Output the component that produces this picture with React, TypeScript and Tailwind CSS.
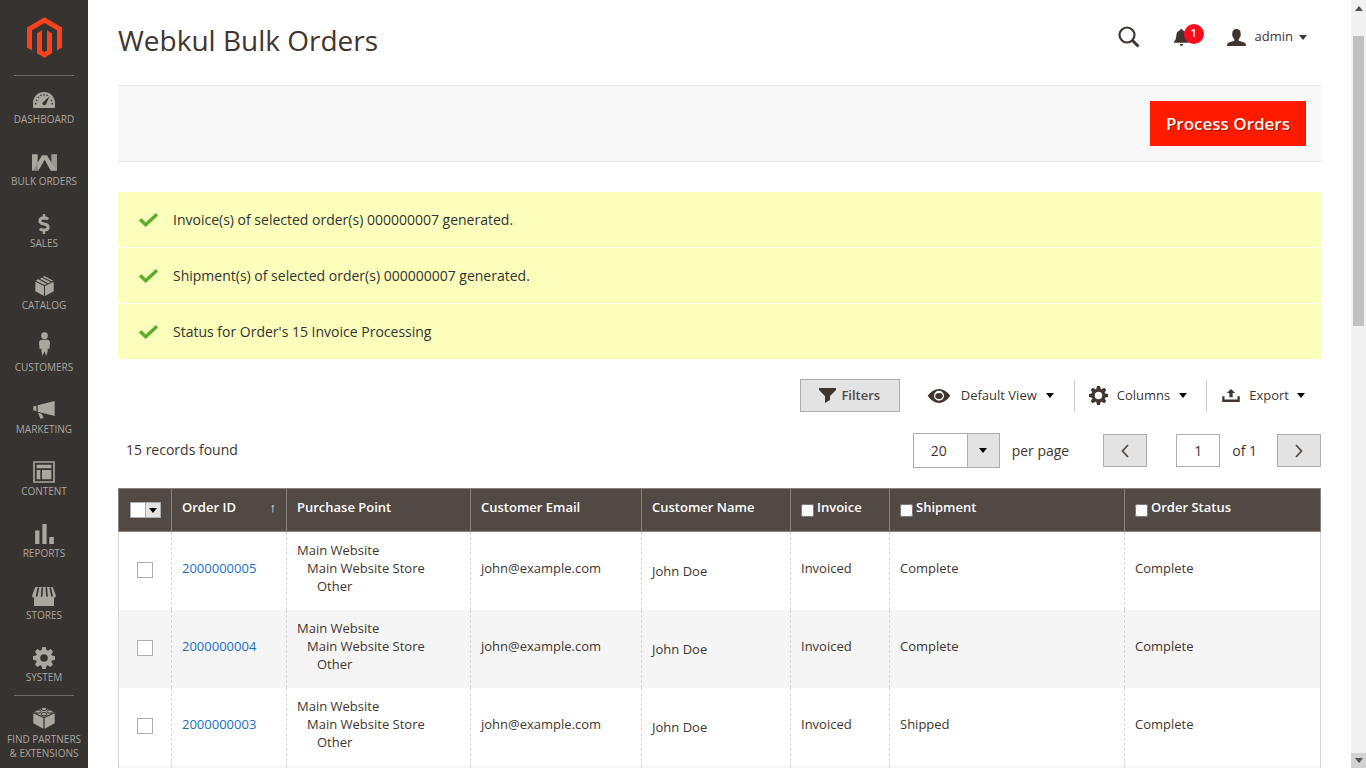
import { ReactNode, useState } from "react";
import { FaDollarSign } from "react-icons/fa";

const DARK = "#373330";

interface NavItem {
  label: string;
  icon: ReactNode;
}

interface Order {
  id: string;
  email: string;
  name: string;
  invoice: string;
  shipment: string;
  status: string;
}

// Gear with eight teeth, shared by the menu and the grid toolbar
function Gear({ className, ring = 13 }: { className: string; ring?: number }) {
  return (
    <svg viewBox="0 0 66 66" className={className} fill="currentColor">
      <circle cx="33" cy="33" r="18" fill="none" stroke="currentColor" strokeWidth={ring} />
      {[0, 45, 90, 135, 180, 225, 270, 315].map((a) => (
        <path key={a} d="M24 15L28 0H38L42 15Z" transform={`rotate(${a} 33 33)`} />
      ))}
    </svg>
  );
}

function Caret({ className = "" }: { className?: string }) {
  return (
    <svg viewBox="0 0 8 5" className={`h-[5px] w-2 shrink-0 ${className}`} fill="currentColor">
      <path d="M0 0H8L4 5Z" />
    </svg>
  );
}

const NAV_ITEMS: NavItem[] = [
  {
    label: "Dashboard",
    icon: (
      <svg viewBox="0 0 66 48" className="h-4 w-[22px]" fill="currentColor">
        <path d="M0 46V33A33 33 0 0 1 66 33V46Q66 48 64 48H2Q0 48 0 46Z" />
        <g fill={DARK}>
          <circle cx="8" cy="35" r="2.5" />
          <circle cx="11" cy="25" r="2.5" />
          <circle cx="16" cy="16" r="2.5" />
          <circle cx="24" cy="10" r="2.5" />
          <circle cx="33" cy="8" r="2.5" />
          <circle cx="42" cy="10" r="2.5" />
          <circle cx="55" cy="25" r="2.5" />
          <circle cx="58" cy="35" r="2.5" />
          <path d="M50 12L39 37A6 6 0 0 1 28 33Z" />
        </g>
      </svg>
    ),
  },
  {
    label: "Bulk Orders",
    icon: (
      <svg viewBox="0 0 75 50" className="h-[17px] w-[25px]" fill="currentColor">
        <path d="M0 0H17V25L30 3H45L58 25V0H75V50H56L38 17L19 50H0Z" />
        <path d="M17 25L19 50H2Z" fill="#000" opacity=".15" />
        <path d="M58 25V0H75V50H72Z" fill="#000" opacity=".08" />
      </svg>
    ),
  },
  { label: "Sales", icon: <FaDollarSign className="h-5 w-3" /> },
  {
    label: "Catalog",
    icon: (
      <svg viewBox="0 0 55 60" className="h-5 w-[19px]" fill="currentColor">
        <path d="M0 17L26 30V60L0 46ZM29 30L55 17V46L29 60ZM1 14L9 10L35 24L28 27ZM13 8L19 5L46 18L39 22ZM22 3L27 0L54 14L49 16Z" />
      </svg>
    ),
  },
  {
    label: "Customers",
    icon: (
      <svg viewBox="0 0 33 96" className="h-8 w-[11px] shrink-0" fill="currentColor">
        <circle cx="16.5" cy="11" r="10" />
        <path d="M8 23H25Q33 24 33 33L31 52L26 49V58L22 72L17 59H16L11 72L7 58V49L2 52L0 33Q0 24 8 23Z" />
      </svg>
    ),
  },
  {
    label: "Marketing",
    icon: (
      <svg viewBox="0 0 64 54" className="h-[18px] w-[22px]" fill="currentColor">
        <path d="M0 16L9 14V31L0 28ZM13 13L64 0V45L13 32ZM14 35L25 38L31 50L22 54Z" />
      </svg>
    ),
  },
  {
    label: "Content",
    icon: (
      <svg viewBox="0 0 66 66" className="h-[22px] w-[22px]" fill="currentColor">
        <path d="M3 3H63V63H3Z" fill="none" stroke="currentColor" strokeWidth="5" />
        <path d="M11 11H55V22H11ZM11 27H22V55H11ZM27 27H55V55H27Z" />
      </svg>
    ),
  },
  {
    label: "Reports",
    icon: (
      <svg viewBox="0 0 57 61" className="h-5 w-[19px]" fill="currentColor">
        <path d="M0 20H13V61H0ZM22 0H35V61H22ZM43 40H57V61H43Z" />
      </svg>
    ),
  },
  {
    label: "Stores",
    icon: (
      <svg viewBox="0 0 72 57" className="h-[19px] w-6" fill="currentColor">
        <path d="M6 30H66V57H6Z" />
        <path d="M10 0H62L72 26Q71 33 64 33H8Q1 33 0 26Z" />
        <path
          d="M19 3L14 27M31 3L29 27M43 3L45 27M55 3L60 27"
          stroke={DARK}
          strokeWidth="5"
          strokeLinecap="round"
        />
      </svg>
    ),
  },
  { label: "System", icon: <Gear className="h-[22px] w-[22px]" /> },
];

const MESSAGES = [
  "Invoice(s) of selected order(s) 000000007 generated.",
  "Shipment(s) of selected order(s) 000000007 generated.",
  "Status for Order's 15 Invoice Processing",
];

const ORDERS: Order[] = [
  { id: "2000000005", email: "john@example.com", name: "John Doe", invoice: "Invoiced", shipment: "Complete", status: "Complete" },
  { id: "2000000004", email: "john@example.com", name: "John Doe", invoice: "Invoiced", shipment: "Complete", status: "Complete" },
  { id: "2000000003", email: "john@example.com", name: "John Doe", invoice: "Invoiced", shipment: "Shipped", status: "Complete" },
];

const COLUMN_COUNT = 8;

const TH = "border border-[#8a837f] px-[10px] pt-[9px] text-left align-top font-semibold leading-[18px]";
const TD = "border-x border-dashed border-[#d6d6d6] px-[10px] pb-[5px] leading-[18px]";

function Sidebar() {
  return (
    <nav className="flex w-[88px] shrink-0 flex-col items-center bg-[#373330] text-[#aaa6a0]">
      <a href="#" aria-label="Home" className="flex h-[76px] w-[60px] shrink-0 justify-center border-b border-[#736963] pt-[17px]">
        <svg viewBox="1.6 0 20.8 24" className="h-[41px] w-[35px]" fill="#f9421f">
          <path d="M12 24l-4.455-2.572v-12l2.97-1.715v12.001l1.485.902 1.485-.902V7.713l2.971 1.715v12L12 24zM22.391 6v12l-2.969 1.714V7.713L12 3.43 4.574 7.713v12.001L1.609 18V6L12 0l10.391 6z" />
        </svg>
      </a>
      <ul className="flex w-full flex-col gap-[22px] pt-3">
        {NAV_ITEMS.map((item) => (
          <li key={item.label}>
            <a href="#" className="flex h-10 flex-col items-center text-[10px] uppercase leading-[14px]">
              <span className="flex h-6 shrink-0 items-center">{item.icon}</span>
              <span>{item.label}</span>
            </a>
          </li>
        ))}
      </ul>
      <a
        href="#"
        className="mt-[9px] flex w-full flex-col items-center text-center text-[10px] uppercase leading-[14px]"
      >
        <span className="mb-[10px] w-[60px] border-t border-[#736963]" />
        <span className="mb-[2px] flex h-6 items-center">
          <svg viewBox="0 0 66 68" className="h-[22px] w-[22px]" fill="currentColor">
            <path d="M0 19L31 34V67L0 50ZM35 34L66 19V50L35 67Z" />
            <path d="M2 16L33 2L64 16L33 31Z" />
            <g stroke={DARK} strokeWidth="3">
              <ellipse cx="33" cy="6" rx="9" ry="5" />
              <ellipse cx="15" cy="14" rx="9" ry="5" />
              <ellipse cx="51" cy="14" rx="9" ry="5" />
              <ellipse cx="33" cy="22" rx="9" ry="5" />
            </g>
          </svg>
        </span>
        <span>Find Partners</span>
        <span className="whitespace-nowrap">&amp; Extensions</span>
      </a>
    </nav>
  );
}

function PageHeader() {
  return (
    <header className="flex h-[85px] items-start justify-between pt-4 pr-[14px]">
      <h1 className="text-[28px] leading-[48px] text-[#41362f]">Webkul Bulk Orders</h1>
      <div className="flex h-[42px] items-center text-[#41362f]">
        <button aria-label="Search" className="mr-[34px]">
          <svg viewBox="0 0 22 22" className="h-[22px] w-[22px]" fill="none" stroke="currentColor">
            <circle cx="9" cy="9" r="7.5" strokeWidth="2.2" />
            <path d="M14.5 14.5L20.5 20.5" strokeWidth="3" />
          </svg>
        </button>
        <button aria-label="Notifications" className="relative mr-[38px]">
          <svg viewBox="0 0 45 51" className="h-[17px] w-[15px]" fill="currentColor">
            <path d="M22 0Q26 0 26 4Q36 7 37 20Q37 32 44 38V41H0V38Q7 32 7 20Q8 7 18 4Q18 0 22 0ZM17 45H28Q26 51 22 51Q18 51 17 45Z" />
          </svg>
          <span className="absolute -top-[5px] left-[10px] flex h-5 w-5 items-center justify-center rounded-full bg-[#ff0a1f] text-[11px] font-semibold text-white">
            1
          </span>
        </button>
        <button className="flex items-center text-[13px]">
          <svg viewBox="0 0 57 51" className="mr-[9px] h-[17px] w-[19px]" fill="currentColor">
            <path d="M28 0C38 0 42 7 41 16C42 18 41 23 39 24C38 28 36 29 35 31V35C40 38 50 38 54 42Q57 45 57 51H0Q0 45 3 42C7 38 17 38 22 35V31C21 29 19 28 18 24C16 23 15 18 16 16C15 7 19 0 28 0Z" />
          </svg>
          admin
          <Caret className="ml-[6px]" />
        </button>
      </div>
    </header>
  );
}

function Messages() {
  return (
    <div className="mt-[30px] flex flex-col gap-px">
      {MESSAGES.map((message) => (
        <div key={message} className="flex h-[55px] items-center bg-[#fbffbb] pl-[21px] text-[14px] text-[#333]">
          <svg viewBox="0 0 57 42" className="mr-[15px] h-[14px] w-[19px]" fill="none" stroke="#5dad2f" strokeWidth="10">
            <path d="M3 19L20 35L54 4" />
          </svg>
          {message}
        </div>
      ))}
    </div>
  );
}

function GridToolbar() {
  return (
    <div className="mt-5 flex h-[33px] items-center justify-end pr-4 text-[13px] text-[#41362f]">
      <button className="mr-[27px] flex h-[33px] w-[100px] items-center justify-center border border-[#adadad] bg-[#e3e3e3] font-semibold text-[#514943]">
        <svg viewBox="0 0 17 15" className="mr-[5px] h-[15px] w-[17px]" fill="#41362f">
          <path d="M0 0H17V2L11 8V12L6 15V8L0 2Z" />
        </svg>
        Filters
      </button>
      <button className="flex items-center">
        <svg viewBox="0 0 63 39" className="mr-[10px] h-[14px] w-6" fill="currentColor">
          <path
            fillRule="evenodd"
            d="M0 19Q14 0 31.5 0T63 19Q49 39 31.5 39T0 19ZM31.5 5A14 14 0 1 0 31.5 33A14 14 0 1 0 31.5 5ZM31.5 12A8 8 0 1 1 31.5 27A8 8 0 1 1 31.5 12Z"
          />
        </svg>
        Default View
        <Caret className="ml-[9px] text-black" />
      </button>
      <span className="ml-5 h-8 border-l border-[#ccc]" />
      <button className="ml-[14px] flex items-center">
        <Gear className="mr-[9px] h-[19px] w-[19px]" ring={10} />
        Columns
        <Caret className="ml-[9px] text-black" />
      </button>
      <span className="ml-[19px] h-8 border-l border-[#ccc]" />
      <button className="ml-[15px] flex items-center">
        <svg viewBox="0 0 54 40" className="mr-[9px] h-[13px] w-[18px]" fill="currentColor">
          <path d="M27 0L40 12H32V25H22V12H14ZM0 22H7V32H47V22H54V40H0Z" />
        </svg>
        Export
        <Caret className="ml-2 text-black" />
      </button>
    </div>
  );
}

function Pager() {
  const [page, setPage] = useState("1");
  const arrow = "flex h-[33px] w-11 items-center justify-center border border-[#adadad] bg-[#e3e3e3] text-[#514943]";

  return (
    <div className="mt-[21px] flex h-[35px] items-center text-[14px] text-[#41362f]">
      <span className="mb-[2px] ml-2">15 records found</span>
      <div className="relative ml-auto h-[35px] w-[87px]">
        <select
          id="per-page"
          defaultValue="20"
          className="h-full w-full appearance-none border border-[#adadad] bg-white pl-[17px] text-[14px]"
        >
          <option>20</option>
          <option>50</option>
          <option>100</option>
        </select>
        <span className="pointer-events-none absolute inset-y-0 right-0 flex w-[33px] items-center justify-center border border-[#adadad] bg-[#e3e3e3] text-black">
          <Caret />
        </span>
      </div>
      <label htmlFor="per-page" className="ml-3">
        per page
      </label>
      <button aria-label="Previous page" className={`ml-[34px] ${arrow}`}>
        <svg viewBox="0 0 8 14" className="h-[14px] w-2" fill="none" stroke="currentColor" strokeWidth="1.7">
          <path d="M7 1L1.5 7L7 13" />
        </svg>
      </button>
      <input
        id="page"
        value={page}
        onChange={(e) => setPage(e.target.value)}
        className="ml-[29px] h-[33px] w-11 border border-[#adadad] bg-white text-center"
      />
      <label htmlFor="page" className="ml-3">
        of 1
      </label>
      <button aria-label="Next page" className={`ml-5 ${arrow}`}>
        <svg viewBox="0 0 8 14" className="h-[14px] w-2" fill="none" stroke="currentColor" strokeWidth="1.7">
          <path d="M1 1L6.5 7L1 13" />
        </svg>
      </button>
    </div>
  );
}

function HeaderCheck({ label }: { label: string }) {
  return (
    <label className="flex items-start gap-[3px]">
      <input type="checkbox" className="mt-[6px] h-[13px] w-[13px]" />
      {label}
    </label>
  );
}

function OrdersTable() {
  return (
    <table className="mt-5 w-full table-fixed border-collapse border border-[#d6d6d6] text-[13px] text-[#41362f]">
      <colgroup>
        <col className="w-[53px]" />
        <col className="w-[115px]" />
        <col className="w-[184px]" />
        <col className="w-[171px]" />
        <col className="w-[149px]" />
        <col className="w-[99px]" />
        <col />
        <col className="w-[196px]" />
      </colgroup>
      <thead className="bg-[#514943] text-white">
        <tr className="h-[43px]">
          <th className="border border-[#8a837f] align-middle">
            <div className="mx-auto flex h-4 w-[31px]">
              <input type="checkbox" aria-label="Select all" className="h-4 w-4 appearance-none border border-[#adadad] bg-white" />
              <button aria-label="Selection options" className="-ml-px flex h-4 w-4 items-center justify-center border border-[#adadad] bg-[#e3e3e3] text-black">
                <Caret />
              </button>
            </div>
          </th>
          <th className={TH}>
            <span className="flex justify-between">
              Order ID <span className="font-normal">↑</span>
            </span>
          </th>
          <th className={TH}>Purchase Point</th>
          <th className={TH}>Customer Email</th>
          <th className={TH}>Customer Name</th>
          <th className={TH}>
            <HeaderCheck label="Invoice" />
          </th>
          <th className={TH}>
            <HeaderCheck label="Shipment" />
          </th>
          <th className={TH}>
            <HeaderCheck label="Order Status" />
          </th>
        </tr>
      </thead>
      <tbody>
        {ORDERS.map((order) => (
          <tr key={order.id} className="h-[78px] even:bg-[#f5f5f5]">
            <td className="pb-[3px] text-center align-middle">
              <input
                type="checkbox"
                aria-label={`Select order ${order.id}`}
                className="h-4 w-4 appearance-none border border-[#adadad] bg-white align-middle"
              />
            </td>
            <td className={TD}>
              <a href="#" className="text-[#1a6fc4]">
                {order.id}
              </a>
            </td>
            <td className={TD}>
              <div>Main Website</div>
              <div className="pl-[10px]">Main Website Store</div>
              <div className="pl-5">Other</div>
            </td>
            <td className={TD}>{order.email}</td>
            <td className="px-[10px] leading-[18px]">{order.name}</td>
            <td className={TD}>{order.invoice}</td>
            <td className={TD}>{order.shipment}</td>
            <td className="px-[10px] pb-[5px] leading-[18px]">{order.status}</td>
          </tr>
        ))}
        <tr className="h-[78px] even:bg-[#f5f5f5]">
          {Array.from({ length: COLUMN_COUNT }, (_, i) => (
            <td key={i} className={TD} />
          ))}
        </tr>
      </tbody>
    </table>
  );
}

function ScrollRail() {
  return (
    <div className="flex w-[15px] shrink-0 flex-col items-center bg-[#f1f1f1] text-[#505050]" aria-hidden="true">
      <div className="flex h-9 w-full justify-center pt-[6px]">
        <Caret className="rotate-180" />
      </div>
      <div className="h-[290px] w-[11px] bg-[#c1c1c1]" />
      <div className="mt-auto flex h-[15px] w-full items-center justify-center bg-[#d2d2d2]">
        <Caret />
      </div>
    </div>
  );
}

export default function App() {
  return (
    <div className="flex h-screen overflow-hidden bg-white font-['Open_Sans',sans-serif]">
      <Sidebar />
      <main className="min-w-0 flex-1 overflow-hidden px-[30px]">
        <PageHeader />
        <div className="flex h-[77px] items-center justify-end border-y border-[#e3e3e3] bg-[#f8f8f8] pr-[15px]">
          <button className="h-[45px] bg-[#ff1a00] px-4 text-[17px] font-semibold text-[#fff3ea] [text-shadow:1px_1px_0_rgba(0,0,0,0.35)]">
            Process Orders
          </button>
        </div>
        <Messages />
        <GridToolbar />
        <Pager />
        <OrdersTable />
      </main>
      <ScrollRail />
    </div>
  );
}
